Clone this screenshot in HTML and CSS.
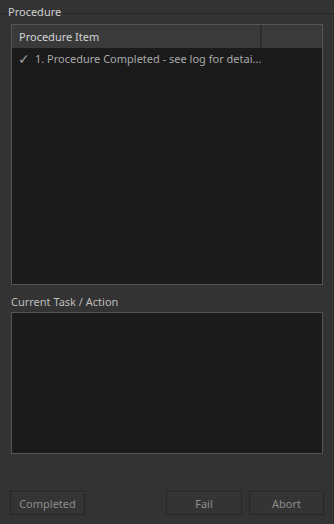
FILE: index.html
```html
<!DOCTYPE html>
<html lang="en">
<head>
    <meta charset="UTF-8">
    <title>Procedure</title>
    <link rel="stylesheet" href="styles.css">
</head>
<body>
    <fieldset class="group">
        <legend>Procedure</legend>

        <div class="tree">
            <div class="tree-head">
                <div class="col col-main">Procedure Item</div>
                <div class="col col-rest"></div>
            </div>
            <div class="tree-body">
                <div class="row">
                    <span class="check">&#10003;</span>
                    <span class="row-text">1. Procedure Completed - see log for detai...</span>
                </div>
            </div>
        </div>

        <div class="label">Current Task / Action</div>
        <div class="task"></div>

        <div class="buttons">
            <button class="btn">Completed</button>
            <span class="spacer"></span>
            <button class="btn btn-wide">Fail</button>
            <button class="btn">Abort</button>
        </div>
    </fieldset>
</body>
</html>
```

FILE: styles.css
```css
* {
    box-sizing: border-box;
}

html, body {
    margin: 0;
    padding: 0;
    background: #333333;
    height: 100%;
    overflow: hidden;
}

body {
    font-family: "Noto Sans", "Open Sans", sans-serif;
    font-size: 11px;
    color: #c8c8c8;
    padding-top: 4px;
}

.group {
    margin: 0;
    padding: 1px 10px 0 11px;
    border: 1px solid #262626;
    border-left: none;
    border-bottom: none;
    box-shadow: inset -1px 0 0 #3c3c3c;
    width: 334px;
    height: 560px;
}

.group legend {
    padding: 0 2px 3px;
    margin-left: -5px;
    line-height: 16px;
    color: #cfcfcf;
}

.tree {
    border: 1px solid #555555;
    background: #1b1b1b;
    height: 261px;
}

.tree-head {
    display: flex;
    height: 23px;
    background: #3a3a3a;
}

.col {
    line-height: 23px;
    color: #d4d4d4;
}

.col-main {
    width: 250px;
    padding-left: 7px;
    border-right: 2px solid #2c2c2c;
}

.col-rest {
    flex: 1;
}

.row {
    display: flex;
    align-items: center;
    gap: 5px;
    height: 20px;
    padding-left: 6px;
    color: #a9a9a9;
}

.check {
    font-size: 14px;
    color: #a0a0a0;
}

.label {
    margin-top: 9px;
    line-height: 16px;
    color: #bdbdbd;
}

.task {
    margin-top: 2px;
    height: 142px;
    border: 1px solid #555555;
    background: #1b1b1b;
}

.buttons {
    display: flex;
    gap: 7px;
    margin: 37px -1px 0 -1px;
}

.spacer {
    flex: 1;
}

.btn {
    width: 75px;
    height: 24px;
    font-family: inherit;
    font-size: 11px;
    color: #8c8c8c;
    background: #343434;
    border: 1px solid #262626;
    box-shadow: inset 0 1px 0 #3b3b3b;
    padding: 0;
}

.btn-wide {
    width: 76px;
}
```
